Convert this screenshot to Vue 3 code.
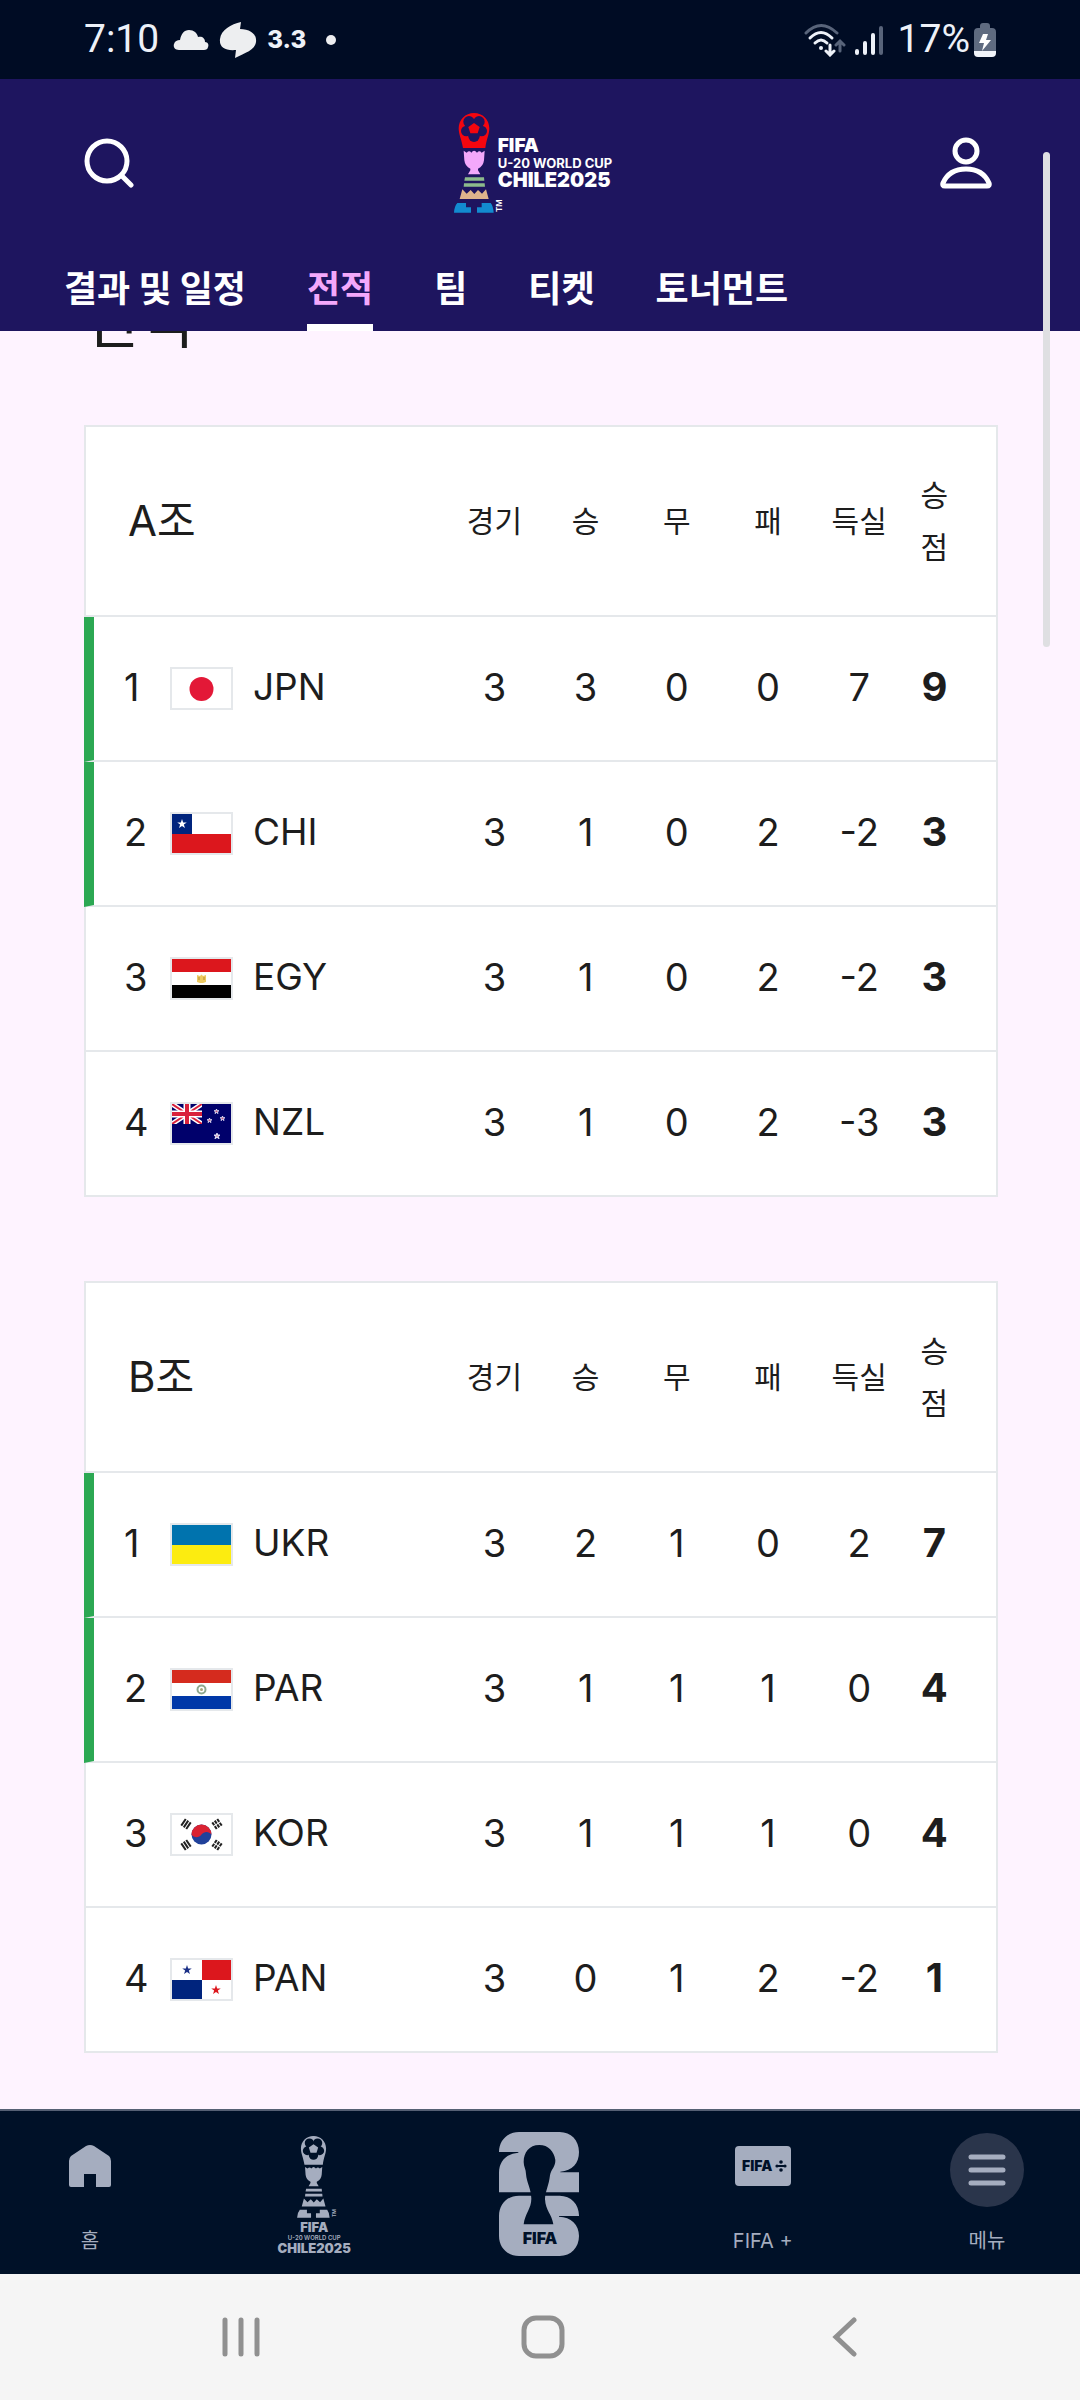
<script setup>
import { ref } from 'vue';

const tabs = ['결과 및 일정', '전적', '팀', '티켓', '토너먼트'];
const activeTab = ref('전적');

const columns = ['경기', '승', '무', '패', '득실', '승점'];

// stats: played, won, drawn, lost, goal difference
const groups = [
  {
    name: 'A조',
    teams: [
      { code: 'JPN', stats: [3, 3, 0, 0, 7], points: 9 },
      { code: 'CHI', stats: [3, 1, 0, 2, -2], points: 3 },
      { code: 'EGY', stats: [3, 1, 0, 2, -2], points: 3 },
      { code: 'NZL', stats: [3, 1, 0, 2, -3], points: 3 },
    ],
  },
  {
    name: 'B조',
    teams: [
      { code: 'UKR', stats: [3, 2, 1, 0, 2], points: 7 },
      { code: 'PAR', stats: [3, 1, 1, 1, 0], points: 4 },
      { code: 'KOR', stats: [3, 1, 1, 1, 0], points: 4 },
      { code: 'PAN', stats: [3, 0, 1, 2, -2], points: 1 },
    ],
  },
];
</script>

<template>
  <div class="screen">
    <!-- shared shapes -->
    <svg class="defs" width="0" height="0" aria-hidden="true">
      <symbol id="trophy" viewBox="0 0 120 300">
        <path class="t-head" d="M60 0C86 0 106 20 106 46C106 64 97 80 94 105H27C23 80 14 64 14 46C14 20 34 0 60 0Z" />
        <g class="t-hole">
          <circle cx="60" cy="47" r="25" />
          <circle cx="45" cy="26" r="17" />
          <circle cx="75" cy="26" r="17" />
          <circle cx="37" cy="54" r="16" />
          <circle cx="83" cy="54" r="16" />
          <circle cx="60" cy="70" r="17" />
          <path class="t-head" d="M54 3H66L60 13Z" />
        </g>
        <path class="t-head" d="M60 30L77 42L71 61H49L43 42Z" />
        <path class="t-cup" d="M29 113L38 119Q46 111 52 119Q60 108 69 119Q76 111 83 119L92 113L90 142Q88 160 72 167V172L79 184H42L49 172V167Q33 160 31 142Z" />
        <path class="t-ring" d="M33 193H90L91 203H31ZM30 211H92L93 221H29Z" />
        <path class="t-base" d="M25 229L38 242L50 231L61 243L72 231L84 242L96 229L104 258H17Z" />
        <path class="t-feet" d="M10 270H36V283H51V299H0Q1 280 10 270ZM110 270H83V283H69V299H119Q118 280 110 270Z" />
      </symbol>
      <symbol id="star" viewBox="-10 -10 20 20">
        <path d="M0-10L2.3-3.1H9.5L3.7 1.2L5.9 8.1L0 3.8L-5.9 8.1L-3.7 1.2L-9.5-3.1H-2.3Z" />
      </symbol>
    </svg>

    <div class="status-bar">
      <div class="status-left">
        <span class="clock">7:10</span>
        <svg width="36" height="22" viewBox="0 0 36 22"><path fill="#edeef0" d="M6 21C2 21 0 18 1 15C2 12 4 11 7 11C8 5 11 1 16 1C21 1 24 4 25 8C29 7 32 9 32 13C35 13 36 16 35 18C35 20 33 21 31 21Z" /></svg>
        <svg width="38" height="36" viewBox="0 0 38 36"><path fill="#edeef0" d="M22 0L21 7C31 7 38 12 37 20C36 28 26 31 16 36L17 28C6 29 0 25 1 17C2 8 12 2 22 0Z" /></svg>
        <span class="reading">3.3</span>
        <span class="dot"></span>
      </div>
      <div class="status-right">
        <svg width="42" height="34" viewBox="0 0 42 34" fill="none" stroke-width="3" stroke-linecap="round">
          <path stroke="#58647a" d="M2 10Q17 -5 33 10" />
          <path stroke="#edf1f8" d="M6 15Q17 4 28 15M11 20Q17 14 23 20" />
          <circle cx="17" cy="25" r="2" fill="#edf1f8" />
          <path stroke="#edf1f8" d="M26 22V31M22 28L26 32L30 28" />
          <path stroke="#58647a" d="M36 28V20M32 22L36 18L40 22" />
        </svg>
        <svg width="30" height="34" viewBox="0 0 30 34" stroke-width="4" stroke-linecap="round">
          <path stroke="#edf1f8" d="M3 28V30M11 20V30M19 12V30" />
          <path stroke="#58647a" d="M27 5V30" />
        </svg>
        <span class="percent">17%</span>
        <svg width="22" height="34" viewBox="0 0 22 34">
          <path fill="#5f6b80" d="M6 5V3Q6 0 9 0H13Q16 0 16 3V5H18Q22 5 22 9V28H0V9Q0 5 4 5Z" />
          <path fill="#f0f4fa" d="M0 28H22V30Q22 34 18 34H4Q0 34 0 30Z" />
          <path fill="#fff" d="M9 11H14L12 17H17L8 28L10 20H5Z" />
        </svg>
      </div>
    </div>

    <header class="header">
      <div class="header-top">
        <button class="icon-button" type="button" aria-label="검색">
          <svg width="50" height="50" viewBox="0 0 50 50" fill="none" stroke="#fff" stroke-width="5" stroke-linecap="round">
            <circle cx="23" cy="23" r="20" />
            <path d="M38 38L47 47" />
          </svg>
        </button>
        <a class="brand" href="#" aria-label="FIFA U-20 World Cup Chile 2025">
          <svg class="brand-mark" width="44" height="100" viewBox="0 0 44 100">
            <use href="#trophy" width="40" height="100" />
            <text class="tm" transform="translate(48 99) rotate(-90)">TM</text>
          </svg>
          <span class="brand-text">
            <span class="brand-fifa">FIFA</span>
            <span class="brand-cup">U-20 WORLD CUP</span>
            <span class="brand-place">CHILE2025</span>
          </span>
        </a>
        <button class="icon-button" type="button" aria-label="계정">
          <svg width="52" height="52" viewBox="0 0 52 52" fill="none" stroke="#fff" stroke-width="5" stroke-linejoin="round">
            <circle cx="26" cy="14" r="11" />
            <path d="M3 46C7 37 15 32 26 32S45 37 49 46Q50 49 47 49H5Q2 49 3 46Z" />
          </svg>
        </button>
      </div>
      <nav class="tabs">
        <a
          v-for="tab in tabs"
          :key="tab"
          href="#"
          class="tab"
          :class="{ active: tab === activeTab }"
          @click.prevent="activeTab = tab"
        >{{ tab }}</a>
      </nav>
    </header>

    <main class="content">
      <h1 class="page-title">전적</h1>
      <table v-for="group in groups" :key="group.name" class="standings">
        <thead>
          <tr>
            <th class="group-name" scope="col">{{ group.name }}</th>
            <th v-for="col in columns" :key="col" scope="col">{{ col }}</th>
          </tr>
        </thead>
        <tbody>
          <tr v-for="(team, i) in group.teams" :key="team.code" :class="{ qualified: i < 2 }">
            <th class="team" scope="row">
              <span class="team-inner">
                <span class="rank">{{ i + 1 }}</span>
                <svg class="flag" width="59" height="39" viewBox="0 0 59 39">
                  <rect width="59" height="39" fill="#fff" />
                  <circle v-if="team.code === 'JPN'" cx="29.5" cy="20" r="12" fill="#e31837" />
                  <template v-else-if="team.code === 'CHI'">
                    <rect y="20" width="59" height="19" fill="#dc171d" />
                    <rect width="20" height="20" fill="#00247d" />
                    <use href="#star" x="5" y="5" width="10" height="10" fill="#fff" />
                  </template>
                  <template v-else-if="team.code === 'EGY'">
                    <rect width="59" height="13" fill="#dc171d" />
                    <rect y="26" width="59" height="13" />
                    <path d="M25 16L28 17L29.5 15.5L31 17L34 16V23L31 24H28L25 23Z" fill="#edca62" />
                    <path d="M27 18V21M32 18V21" stroke="#b58b32" />
                  </template>
                  <template v-else-if="team.code === 'NZL'">
                    <rect width="59" height="39" fill="#00006b" />
                    <path d="M0 0L30 20M30 0L0 20" stroke="#fff" stroke-width="5" />
                    <path d="M0 0L30 20M30 0L0 20" stroke="#d9213b" stroke-width="2" />
                    <path d="M15 0V20M0 10H30" stroke="#fff" stroke-width="7" />
                    <path d="M15 0V20M0 10H30" stroke="#d9213b" stroke-width="4" />
                    <path d="M0 20H30V0H59V39H0Z" fill="#00006b" />
                    <g fill="#c9446b" stroke="#dcdcf4" stroke-width="4">
                      <use href="#star" x="42" y="5" width="5" height="5" />
                      <use href="#star" x="35" y="14" width="5" height="5" />
                      <use href="#star" x="48" y="12" width="5" height="5" />
                      <use href="#star" x="42" y="29" width="6" height="6" />
                    </g>
                  </template>
                  <template v-else-if="team.code === 'UKR'">
                    <rect width="59" height="20" fill="#0073ae" />
                    <rect y="20" width="59" height="19" fill="#fcec10" />
                  </template>
                  <template v-else-if="team.code === 'PAR'">
                    <rect width="59" height="13" fill="#d52b1e" />
                    <rect y="26" width="59" height="13" fill="#0038a8" />
                    <circle cx="29.5" cy="19.5" r="4" fill="none" stroke="#8fa88e" stroke-width="2" />
                    <circle cx="29.5" cy="19.5" r="1.5" fill="#a9a67a" />
                  </template>
                  <template v-else-if="team.code === 'KOR'">
                    <circle cx="29.5" cy="19.5" r="10" fill="#20419a" />
                    <path d="M19.5 19.5A10 10 0 0 1 39.5 19.5C37 16 32 16 29.5 19.5S22 23 19.5 19.5Z" fill="#da2232" />
                    <g stroke="#222" stroke-width="2">
                      <path transform="translate(14 9) rotate(-56)" d="M-4-3H4M-4 0H4M-4 3H4" />
                      <path transform="translate(45 9) rotate(56)" d="M-4-3H4M-4 0H4M-4 3H4" stroke-dasharray="3.5 1" />
                      <path transform="translate(14 30) rotate(56)" d="M-4-3H4M-4 0H4M-4 3H4" />
                      <path transform="translate(45 30) rotate(-56)" d="M-4-3H4M-4 0H4M-4 3H4" stroke-dasharray="3.5 1" />
                    </g>
                  </template>
                  <template v-else-if="team.code === 'PAN'">
                    <rect x="30" width="29" height="20" fill="#dc171d" />
                    <rect y="20" width="30" height="19" fill="#00247d" />
                    <use href="#star" x="10" y="5" width="10" height="10" fill="#1a2f86" />
                    <use href="#star" x="39" y="25" width="10" height="10" fill="#dc171d" />
                  </template>
                </svg>
                <span class="code">{{ team.code }}</span>
              </span>
            </th>
            <td v-for="(value, j) in team.stats" :key="j">{{ value }}</td>
            <td class="points">{{ team.points }}</td>
          </tr>
        </tbody>
      </table>
    </main>

    <nav class="app-nav">
      <a class="nav-item" href="#">
        <span class="nav-icon raised">
          <svg width="44" height="44" viewBox="0 0 44 44"><path fill="#a5adbf" d="M18 2Q22 0 26 2L41 12Q43 14 43 17V41Q43 43 41 43H28V30H16V43H3Q1 43 1 41V17Q1 14 3 12Z" /></svg>
        </span>
        <span class="nav-label">홈</span>
      </a>
      <a class="nav-item tournament" href="#">
        <svg width="48" height="82" viewBox="0 0 48 82">
          <use href="#trophy" x="7" width="33" height="82" />
          <text class="tm small" transform="translate(46 81) rotate(-90)">TM</text>
        </svg>
        <span class="mini-fifa">FIFA</span>
        <span class="mini-cup">U-20 WORLD CUP</span>
        <span class="mini-place">CHILE2025</span>
      </a>
      <a class="nav-item emblem" href="#">
        <svg width="80" height="124" viewBox="0 0 240 372">
          <path fill="#a5adbf" d="M0 60C0 25 25 0 60 0H182C216 0 240 25 240 60C240 94 220 116 184 119V121H240V181H0V122C0 88 22 65 58 62V60Z" />
          <path fill="#a5adbf" d="M0 252C0 217 25 191 60 191H182C216 191 240 217 240 250V252H180V254C216 255 240 278 240 312C240 346 216 372 182 372H60C25 372 0 346 0 312Z" />
          <path fill="#001128" d="M121 39C90 39 74 62 74 90C74 104 81 112 81 126C83 152 97 172 97 200C97 230 78 244 74 277H163C158 246 140 236 138 202C138 180 150 160 153 130C156 112 170 104 169 84C165 58 148 39 121 39Z" />
          <text class="emblem-text" x="123" y="336">FIFA</text>
        </svg>
      </a>
      <a class="nav-item" href="#">
        <span class="nav-icon raised">
          <svg width="56" height="40" viewBox="0 0 56 40">
            <rect width="56" height="40" rx="4" fill="#a5adbf" />
            <text class="plus-text" x="7" y="25">FIFA</text>
            <g fill="#001128">
              <circle cx="42" cy="20" r="1.6" />
              <circle cx="50" cy="20" r="1.6" />
              <circle cx="46" cy="16" r="1.8" />
              <circle cx="46" cy="24" r="1.8" />
              <path d="M43 19H49V21H43Z" />
            </g>
          </svg>
        </span>
        <span class="nav-label">FIFA +</span>
      </a>
      <button class="nav-item" type="button">
        <span class="nav-icon round">
          <svg width="38" height="32" viewBox="0 0 38 32" stroke="#a5adbf" stroke-width="5" stroke-linecap="round"><path d="M3 3H35M3 16H35M3 29H35" /></svg>
        </span>
        <span class="nav-label">메뉴</span>
      </button>
    </nav>

    <div class="system-nav">
      <button type="button" aria-label="최근 앱">
        <svg width="40" height="40" viewBox="0 0 40 40" stroke="#909090" stroke-width="5" stroke-linecap="round"><path d="M4 3V37M20 3V37M36 3V37" /></svg>
      </button>
      <button type="button" aria-label="홈 화면">
        <svg width="44" height="44" viewBox="0 0 44 44" fill="none" stroke="#909090" stroke-width="5"><rect x="3" y="3" width="38" height="38" rx="12" /></svg>
      </button>
      <button type="button" aria-label="뒤로">
        <svg width="40" height="40" viewBox="0 0 40 40" fill="none" stroke="#909090" stroke-width="5" stroke-linecap="round"><path d="M29 3L11 20L29 37" /></svg>
      </button>
    </div>

    <div class="scroll-thumb"></div>
  </div>
</template>

<style>
body {
  margin: 0;
}
</style>

<style scoped>
.screen {
  position: relative;
  display: flex;
  flex-direction: column;
  min-height: 100vh;
  background: #fef3ff;
  color: #1d1d1d;
  font-family: Inter, 'Noto Sans CJK KR', sans-serif;
}
.screen svg {
  display: block;
  flex: none;
}
.screen .defs {
  position: absolute;
}
a {
  color: inherit;
  text-decoration: none;
}
button {
  padding: 0;
  border: 0;
  background: none;
  color: inherit;
  font: inherit;
  cursor: pointer;
}

/* trophy colours */
.t-head { fill: var(--head); }
.t-hole { fill: var(--hole); }
.t-cup { fill: var(--cup); }
.t-ring { fill: var(--ring); }
.t-base { fill: var(--base); }
.t-feet { fill: var(--feet); }
.tm {
  font-size: 8px;
  font-weight: 600;
  fill: currentColor;
}
.tm.small {
  font-size: 5px;
}

/* status bar */
.status-bar {
  display: flex;
  align-items: center;
  justify-content: space-between;
  box-sizing: border-box;
  height: 79px;
  padding: 0 84px;
  background: #000c24;
  color: #edf1f8;
  font-family: Roboto, sans-serif;
}
.status-left,
.status-right {
  display: flex;
  align-items: center;
  gap: 10px;
}
.clock,
.percent {
  padding-bottom: 2px;
  font-size: 39px;
  line-height: 48px;
}
.clock {
  margin-right: 4px;
}
.reading {
  font-family: Inter, sans-serif;
  font-size: 24px;
  font-weight: 800;
}
.dot {
  width: 10px;
  height: 10px;
  margin-left: 10px;
  border-radius: 50%;
  background: #edeef0;
}
.status-right {
  gap: 8px;
}
.percent {
  margin: 0 -4px 0 6px;
}

/* header */
.header {
  background: #1e155f;
  color: #fff;
}
.header-top {
  display: flex;
  align-items: center;
  justify-content: space-between;
  height: 168px;
  padding: 0 88px 0 84px;
}
.brand {
  --head: #f5060f;
  --hole: #1e155f;
  --cup: #f3a8fb;
  --ring: #8dbb8c;
  --base: #deb48c;
  --feet: #128bd0;
  display: flex;
  align-items: center;
  margin-right: 8px;
}
.screen .brand-mark {
  overflow: visible;
}
.brand-text {
  display: flex;
  flex-direction: column;
}
.brand-fifa {
  font-size: 19px;
  font-weight: 900;
  line-height: 18px;
}
.brand-cup {
  font-size: 13px;
  font-weight: 700;
  line-height: 16px;
}
.brand-place {
  font-size: 20px;
  font-weight: 900;
  line-height: 18px;
}
.tabs {
  display: flex;
  gap: 61px;
  height: 84px;
  padding-left: 64px;
  font-family: 'Noto Sans CJK KR', sans-serif;
}
.tab {
  box-sizing: border-box;
  padding-top: 15px;
  font-size: 36px;
  font-weight: 700;
  line-height: 48px;
  white-space: nowrap;
}
.tab.active {
  color: #f3a8fb;
  border-bottom: 7px solid #fff;
}

/* standings */
.content {
  flex: 1;
  padding: 0 82px 56px 84px;
  overflow: hidden;
}
.page-title {
  margin: -46px 0 68px;
  font-size: 60px;
  font-weight: 400;
  line-height: 72px;
}
.standings {
  width: 100%;
  table-layout: fixed;
  border-spacing: 0;
  border-right: 2px solid #e5e8eb;
  background: #fff;
}
.standings + .standings {
  margin-top: 84px;
}
.standings th,
.standings td {
  box-sizing: border-box;
  width: 10%;
  height: 145px;
  padding: 0 0 4px;
  border-bottom: 2px solid #e5e8eb;
  font-size: 38px;
  font-weight: 400;
  line-height: 52px;
  text-align: center;
}
.standings thead th {
  height: 192px;
  padding: 0;
  border-top: 2px solid #e5e8eb;
  font-size: 30px;
}
.standings thead th:last-child,
.standings .points {
  padding-right: 36px;
  padding-left: 4px;
}
.standings .points {
  font-size: 40px;
  font-weight: 700;
}
.standings tr th:first-child {
  width: 40%;
  border-left: 2px solid #e5e8eb;
  text-align: left;
}
.standings thead .group-name {
  padding-left: 42px;
  font-size: 42px;
}
.standings .team {
  padding: 0 0 0 38px;
}
.standings .qualified .team {
  padding-left: 30px;
  border-left: 10px solid #2ca853;
}
.team-inner {
  display: flex;
  align-items: center;
}
.rank {
  width: 46px;
  padding-bottom: 4px;
}
.flag {
  border: 2px solid #e5e8eb;
}
.code {
  padding: 0 0 4px 20px;
  font-size: 37px;
}

/* app navigation */
.app-nav {
  --head: #a5adbf;
  --hole: #001128;
  --cup: #a5adbf;
  --ring: #a5adbf;
  --base: #a5adbf;
  --feet: #a5adbf;
  display: flex;
  justify-content: space-between;
  box-sizing: border-box;
  height: 165px;
  padding: 0 53px 0 50px;
  border-top: 2px solid #566074;
  background: #001128;
  color: #a5adbf;
}
.nav-item {
  display: flex;
  flex-direction: column;
  align-items: center;
  width: 80px;
  padding-top: 22px;
}
.nav-icon {
  display: flex;
  align-items: center;
  justify-content: center;
  box-sizing: border-box;
  width: 74px;
  height: 74px;
}
.nav-icon.raised {
  padding-bottom: 8px;
}
.nav-icon.round {
  border-radius: 50%;
  background: #2a354b;
}
.nav-label {
  margin-top: 22px;
  font-size: 20px;
  line-height: 24px;
  white-space: nowrap;
}
.tournament {
  padding-top: 25px;
  white-space: nowrap;
}
.mini-fifa,
.mini-place {
  font-size: 13px;
  font-weight: 900;
  line-height: 12px;
}
.mini-fifa {
  margin-top: 3px;
}
.mini-cup {
  font-size: 6px;
  font-weight: 600;
  line-height: 9px;
}
.emblem {
  padding-top: 21px;
}
.emblem-text {
  fill: #001128;
  font-size: 48px;
  font-weight: 900;
  text-anchor: middle;
}
.plus-text {
  fill: #001128;
  font-size: 14px;
  font-weight: 900;
}

/* system navigation */
.system-nav {
  display: flex;
  align-items: center;
  justify-content: center;
  gap: 242px;
  height: 126px;
  padding-left: 6px;
  background: #f5f5f5;
}
.system-nav button {
  display: flex;
  justify-content: center;
  width: 60px;
}

.scroll-thumb {
  position: absolute;
  top: 152px;
  right: 30px;
  z-index: 2;
  width: 7px;
  height: 495px;
  border-radius: 4px;
  background: #dfdfe2;
}
</style>
